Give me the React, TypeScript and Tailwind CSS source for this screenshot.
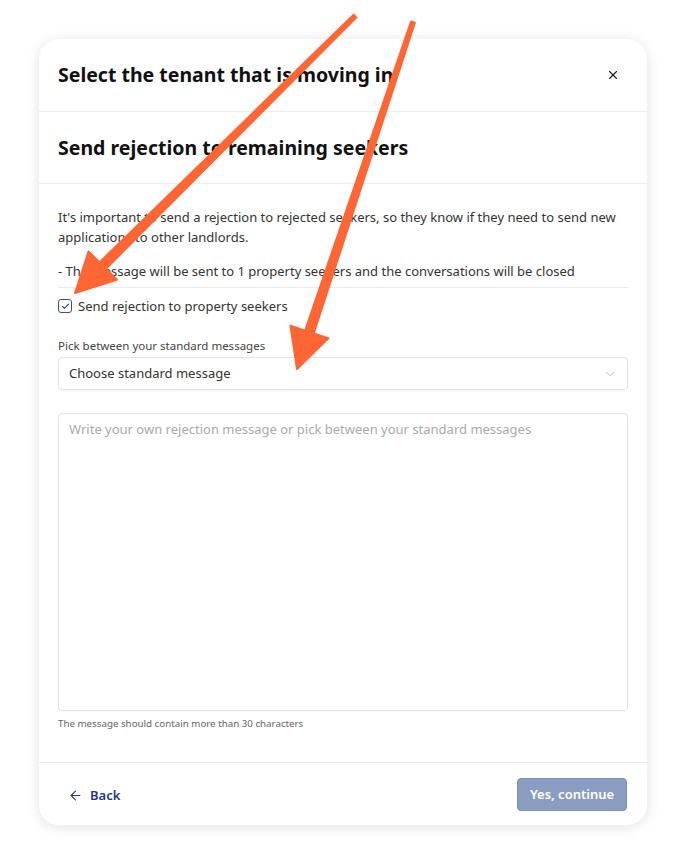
import { ArrowLeft, X, ChevronDown, Check } from 'lucide-react';

const font = { fontFamily: '"Noto Sans", "Open Sans", Arial, sans-serif' };

function Arrows() {
    return (
        <svg
            className="pointer-events-none absolute left-0 top-0"
            width="686"
            height="864"
            viewBox="0 0 686 864"
        >
            <g fill="#ff6633" stroke="#ff6633" strokeWidth="2" strokeLinejoin="round">
                <polygon points="356.4,17.4 105.9,268.8 116.8,279.8 75,293 88.6,251.4 99.5,262.4 353.6,14.6" />
                <polygon points="414.9,22.6 313.7,333.4 328.4,338.3 297,369 290.4,325.7 305.1,330.6 411.1,21.4" />
            </g>
        </svg>
    );
}

export default function App() {
    return (
        <div className="relative min-h-[864px] w-full bg-white" style={font}>
            <div className="h-[39px]" />
            <div className="mx-auto w-[608px] rounded-[20px] bg-white shadow-[0_2px_14px_rgba(0,0,0,0.12)]">
                {/* Header */}
                <div className="flex h-[73px] items-center justify-between border-b border-[#ececec] pl-[19px] pr-[27px]">
                    <h1 className="text-[19.5px] font-bold text-[#111]">Select the tenant that is moving in</h1>
                    <X className="h-[14px] w-[14px] text-[#222]" strokeWidth={2} />
                </div>
                <div className="flex h-[72px] items-center border-b border-[#ececec] pl-[19px]">
                    <h2 className="text-[19.5px] font-bold text-[#111]">Send rejection to remaining seekers</h2>
                </div>

                {/* Body */}
                <div className="px-[19px] pt-[23px]">
                    <p className="text-[13px] leading-[20px] text-[#333]">
                        It's important to send a rejection to rejected seekers, so they know if they need to send new
                        applications to other landlords.
                    </p>
                    <p className="mt-[14px] border-b border-[#ececec] pb-[6px] text-[13px] leading-[20px] text-[#333]">
                        - The message will be sent to 1 property seekers and the conversations will be closed
                    </p>

                    <label className="mt-[8px] flex items-center gap-[6px]">
                        <span className="flex h-[14px] w-[14px] items-center justify-center rounded-[3px] border border-[#3d4f82] bg-white">
                            <Check className="h-[9px] w-[9px] text-[#3d4f82]" strokeWidth={3} />
                        </span>
                        <span className="text-[13px] leading-[20px] text-[#333]">Send rejection to property seekers</span>
                    </label>

                    <div className="mt-[22px] text-[11.5px] leading-[16px] text-[#444]">Pick between your standard messages</div>
                    <div className="mt-[3px] flex h-[33px] items-center justify-between rounded-[4px] border border-[#e3e3e3] pl-[10px] pr-[10px] shadow-[0_1px_2px_rgba(0,0,0,0.04)]">
                        <span className="text-[13px] text-[#333]">Choose standard message</span>
                        <ChevronDown className="h-[14px] w-[14px] text-[#aaa]" strokeWidth={1.5} />
                    </div>

                    <div className="mt-[23px] h-[298px] rounded-[4px] border border-[#e3e3e3] px-[10px] pt-[2px] shadow-[0_1px_2px_rgba(0,0,0,0.04)]">
                        <span className="text-[13px] text-[#aaa]">
                            Write your own rejection message or pick between your standard messages
                        </span>
                    </div>
                    <div className="mt-[6px] pb-[31px] text-[9.75px] leading-[14px] text-[#666]">
                        The message should contain more than 30 characters
                    </div>
                </div>

                {/* Footer */}
                <div className="flex h-[63px] items-center justify-between border-t border-[#ececec] pl-[29px] pr-[20px]">
                    <button className="flex items-center gap-[7px] pt-[3px] text-[13px] font-semibold text-[#1f3a7a]">
                        <ArrowLeft className="h-[15px] w-[15px]" strokeWidth={1.75} />
                        Back
                    </button>
                    <button className="h-[33px] w-[110px] rounded-[4px] border border-[#7f90b8] bg-[#8b9cc1] pt-[2px] text-[13px] font-semibold text-white">
                        Yes, continue
                    </button>
                </div>
            </div>
            <Arrows />
        </div>
    );
}
